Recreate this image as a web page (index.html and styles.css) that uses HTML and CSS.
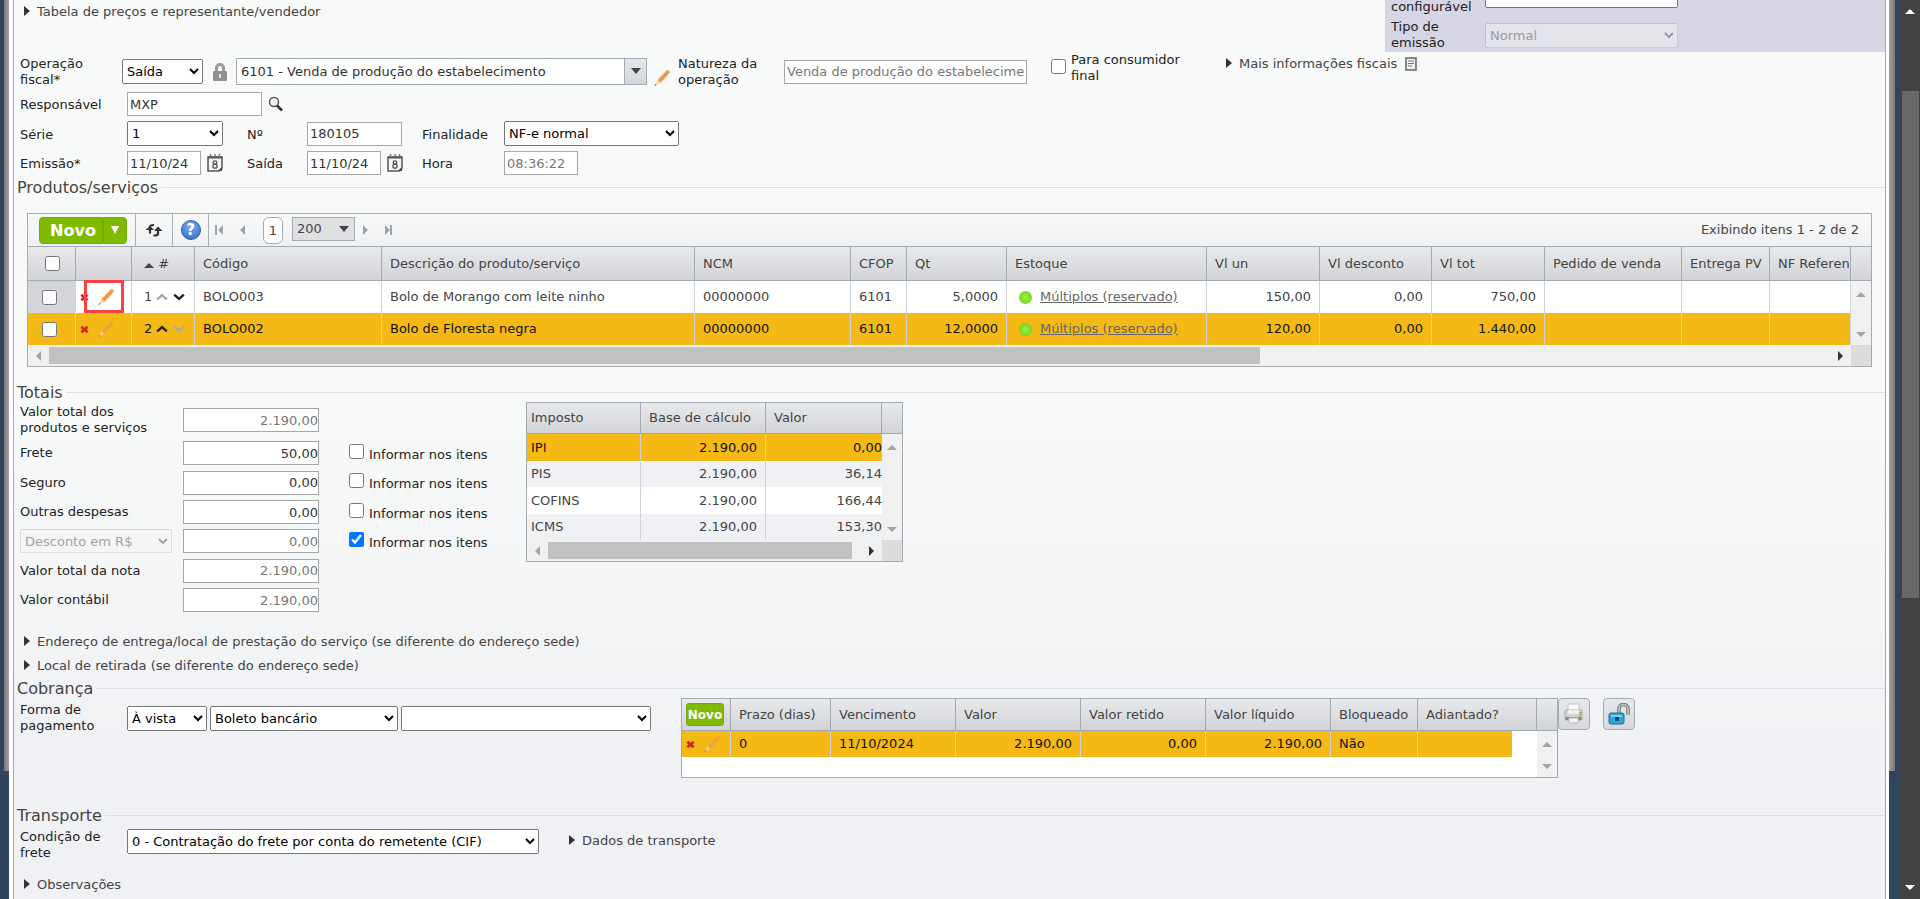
FILE: index.html
```html
<!DOCTYPE html>
<html lang="pt-BR">
<head>
    <meta charset="UTF-8">
    <title>Nota fiscal</title>
    <link rel="stylesheet" href="styles.css">
</head>
<body>
    <!-- icons used more than once -->
    <svg class="sprite" aria-hidden="true">
        <symbol id="pencil" viewBox="0 0 18 18">
            <path d="M4.500 11 13.500 1.500a1.500 1.500 0 0 1 2.200 0l.7.7a1.500 1.500 0 0 1 0 2L7.500 14z" fill="#f0a04b"/>
            <path d="M6 12.500 15 3" stroke="#e8903f" stroke-width="1" fill="none"/>
            <path d="M4.500 11 7.500 14 1.500 17z" fill="#f3d9b8"/>
            <path d="M2.300 15 3.500 16 1.500 17z" fill="#555"/>
        </symbol>
        <symbol id="delete" viewBox="0 0 10 10">
            <path d="M1.500 2 8.500 8M8.500 2 1.500 8" stroke="#cb2a22" stroke-width="3" fill="none"/>
        </symbol>
        <symbol id="calendar" viewBox="0 0 16 18">
            <path d="M1 3h14v11l-3 3H1z" fill="#f6f6f6" stroke="#555" stroke-width="1.500"/>
            <path d="M1 2.500h14v2H1z" fill="#555"/>
            <path d="M3.500 0v3M8 0v3M12.500 0v3" stroke="#777" stroke-width="1.500"/>
            <path d="M15 13v4h-4z" fill="#444"/>
            <ellipse cx="8" cy="8.500" rx="1.800" ry="1.700" fill="none" stroke="#555" stroke-width="1.300"/>
            <ellipse cx="8" cy="12.200" rx="2.100" ry="2" fill="none" stroke="#555" stroke-width="1.300"/>
        </symbol>
        <symbol id="up" viewBox="0 0 10 6"><path d="M1 5 5 1.500 9 5" stroke="currentColor" stroke-width="2" fill="none"/></symbol>
        <symbol id="down" viewBox="0 0 10 6"><path d="M1 1 5 4.500 9 1" stroke="currentColor" stroke-width="2" fill="none"/></symbol>
    </svg>

    <div class="frame frame-left"></div>

    <div class="window">
        <main class="page">
            <div class="top">
                <details class="more"><summary>Tabela de preços e representante/vendedor</summary></details>
                <div class="panel">
                    <div class="panel-row">
                        <label for="config">configurável</label>
                        <select id="config"><option></option></select>
                    </div>
                    <div class="panel-row">
                        <label for="tipo">Tipo de emissão</label>
                        <select id="tipo" disabled><option>Normal</option></select>
                    </div>
                </div>
            </div>

            <div class="fiscal">
                <label class="label-op" for="operacao">Operação fiscal*</label>
                <select class="w-op" id="operacao"><option>Saída</option></select>
                <svg class="lock" viewBox="0 0 14 18" width="14" height="18">
                    <path d="M3.500 9V5a3.500 3.500 0 0 1 7 0v4" fill="none" stroke="#999" stroke-width="3"/>
                    <rect x="0" y="8" width="14" height="10" rx="1" fill="#8f8f8f"/>
                    <path d="M6 11h2v4H6z" fill="#ddd"/>
                </svg>
                <div class="combo">
                    <input type="text" aria-label="CFOP" value="6101 - Venda de produção do estabelecimento">
                    <button aria-label="Abrir lista"><span class="tri-down"></span></button>
                </div>
                <svg class="edit" width="18" height="18"><use href="#pencil"/></svg>
                <label class="label-nat" for="natureza">Natureza da operação</label>
                <input class="w-nat dim" id="natureza" type="text" value="Venda de produção do estabelecimento">
                <div class="consumer">
                    <input type="checkbox" id="consumidor">
                    <label for="consumidor">Para consumidor final</label>
                </div>
                <details class="more fiscal-more"><summary>Mais informações fiscais
                    <svg width="12" height="14" viewBox="0 0 12 14">
                        <path d="M1 1h10v12H1z" fill="#eee" stroke="#666" stroke-width="1.500"/>
                        <path d="M3 4h6M3 6.500h6M3 9h4" stroke="#777"/>
                    </svg>
                </summary></details>
            </div>

            <div class="fields">
                <label for="resp">Responsável</label>
                <div class="field wide">
                    <input class="w-resp" id="resp" type="text" value="MXP">
                    <svg width="16" height="16" viewBox="0 0 16 16">
                        <circle cx="6" cy="6" r="4.500" fill="#eef3f5" stroke="#555" stroke-width="1.500"/>
                        <path d="M9 9.500 14 14.500" stroke="#333" stroke-width="2.500"/>
                    </svg>
                </div>

                <label for="serie">Série</label>
                <select class="w-serie" id="serie"><option>1</option></select>
                <label for="numero">Nº</label>
                <input class="w-num" id="numero" type="text" value="180105">
                <label for="finalidade">Finalidade</label>
                <select class="w-fin" id="finalidade"><option>NF-e normal</option></select>

                <label for="emissao">Emissão*</label>
                <div class="field">
                    <input class="w-date" id="emissao" type="text" value="11/10/24">
                    <svg width="16" height="18"><use href="#calendar"/></svg>
                </div>
                <label for="saida">Saída</label>
                <div class="field">
                    <input class="w-date" id="saida" type="text" value="11/10/24">
                    <svg width="16" height="18"><use href="#calendar"/></svg>
                </div>
                <label for="hora">Hora</label>
                <input class="w-date dim" id="hora" type="text" value="08:36:22">
            </div>

            <h2>Produtos/serviços</h2>
            <div class="grid products">
                <div class="toolbar">
                    <div class="split">
                        <button class="novo">Novo</button>
                        <button class="novo-more" aria-label="Mais opções"><span class="tri-down"></span></button>
                    </div>
                    <button class="tool refresh" aria-label="Atualizar">
                        <svg width="18" height="14" viewBox="0 0 18 14">
                            <path d="M5 10.500V3.500Q5 2 9 2" fill="none" stroke="#333" stroke-width="2.200"/>
                            <path d="M0.500 7 5 3 9 7z" fill="#333"/>
                            <path d="M13 5v6Q13 12.500 8.500 12.500" fill="none" stroke="#333" stroke-width="2.200"/>
                            <path d="M9 8 13 3.500 17.500 8z" fill="#333"/>
                        </svg>
                    </button>
                    <button class="tool" aria-label="Ajuda"><span class="help">?</span></button>
                    <div class="pager">
                        <span class="bar"></span><span class="tri-left first"></span>
                        <span class="tri-left prev"></span>
                        <button class="current">1</button>
                        <div class="size">
                            <select aria-label="Itens por página"><option>200</option></select>
                            <span class="tri-down"></span>
                        </div>
                        <span class="tri-right next"></span>
                        <span class="tri-right"></span><span class="bar"></span>
                    </div>
                    <span class="count">Exibindo itens 1 - 2 de 2</span>
                </div>
                <table>
                    <colgroup>
                        <col class="c48"><col class="c56"><col class="c63"><col class="c187"><col>
                        <col class="c156"><col class="c56"><col class="c100"><col class="c200"><col class="c113">
                        <col class="c112"><col class="c113"><col class="c137"><col class="c88"><col class="c81"><col class="c20">
                    </colgroup>
                    <thead>
                        <tr>
                            <th class="check"><input type="checkbox" aria-label="Marcar todos"></th>
                            <th></th>
                            <th class="order"><span class="tri-up"></span> #</th>
                            <th>Código</th>
                            <th>Descrição do produto/serviço</th>
                            <th>NCM</th>
                            <th>CFOP</th>
                            <th>Qt</th>
                            <th>Estoque</th>
                            <th>Vl un</th>
                            <th>Vl desconto</th>
                            <th>Vl tot</th>
                            <th>Pedido de venda</th>
                            <th>Entrega PV</th>
                            <th>NF Referen</th>
                            <th></th>
                        </tr>
                    </thead>
                    <tbody>
                        <tr>
                            <td class="check grey"><input type="checkbox" aria-label="BOLO003"></td>
                            <td class="actions marked"><svg width="9" height="9"><use href="#delete"/></svg><svg width="18" height="18"><use href="#pencil"/></svg></td>
                            <td class="order">1 <svg class="off" width="12" height="8"><use href="#up"/></svg> <svg width="12" height="8"><use href="#down"/></svg></td>
                            <td>BOLO003</td>
                            <td>Bolo de Morango com leite ninho</td>
                            <td>00000000</td>
                            <td>6101</td>
                            <td class="num">5,0000</td>
                            <td><span class="dot"></span><a href="#">Múltiplos (reservado)</a></td>
                            <td class="num">150,00</td>
                            <td class="num">0,00</td>
                            <td class="num">750,00</td>
                            <td></td>
                            <td></td>
                            <td></td>
                            <td class="scroll-top"><span class="tri-up"></span></td>
                        </tr>
                        <tr class="selected">
                            <td class="check"><input type="checkbox" aria-label="BOLO002"></td>
                            <td class="actions"><svg width="9" height="9"><use href="#delete"/></svg><svg class="faded" width="18" height="18"><use href="#pencil"/></svg></td>
                            <td class="order">2 <svg width="12" height="8"><use href="#up"/></svg> <svg class="off" width="12" height="8"><use href="#down"/></svg></td>
                            <td>BOLO002</td>
                            <td>Bolo de Floresta negra</td>
                            <td>00000000</td>
                            <td>6101</td>
                            <td class="num">12,0000</td>
                            <td><span class="dot"></span><a href="#">Múltiplos (reservado)</a></td>
                            <td class="num">120,00</td>
                            <td class="num">0,00</td>
                            <td class="num">1.440,00</td>
                            <td></td>
                            <td></td>
                            <td></td>
                            <td class="scroll-bottom"><span class="tri-down"></span></td>
                        </tr>
                    </tbody>
                </table>
                <div class="hscroll">
                    <span class="tri-left"></span>
                    <div class="track"><div class="thumb thumb-products"></div></div>
                    <span class="tri-right"></span>
                    <div class="corner"></div>
                </div>
            </div>

            <h2 class="title-totals">Totais</h2>
            <div class="totals">
                <div class="sums">
                    <label for="vprod">Valor total dos produtos e serviços</label>
                    <input class="dim" id="vprod" type="text" value="2.190,00">
                    <span></span>

                    <label for="frete">Frete</label>
                    <input id="frete" type="text" value="50,00">
                    <div class="inform"><input type="checkbox" id="i1"><label for="i1">Informar nos itens</label></div>

                    <label for="seguro">Seguro</label>
                    <input id="seguro" type="text" value="0,00">
                    <div class="inform"><input type="checkbox" id="i2"><label for="i2">Informar nos itens</label></div>

                    <label for="outras">Outras despesas</label>
                    <input id="outras" type="text" value="0,00">
                    <div class="inform"><input type="checkbox" id="i3"><label for="i3">Informar nos itens</label></div>

                    <select class="w-desc" aria-label="Tipo de desconto" disabled><option>Desconto em R$</option></select>
                    <input class="dim" type="text" aria-label="Desconto" value="0,00">
                    <div class="inform"><input type="checkbox" id="i4" checked><label for="i4">Informar nos itens</label></div>

                    <label for="vnota">Valor total da nota</label>
                    <input class="dim" id="vnota" type="text" value="2.190,00">
                    <span></span>

                    <label for="vcont">Valor contábil</label>
                    <input class="dim" id="vcont" type="text" value="2.190,00">
                    <span></span>
                </div>

                <div class="grid taxes">
                    <table>
                        <colgroup><col class="c114"><col class="c125"><col><col class="c20"></colgroup>
                        <thead>
                            <tr><th>Imposto</th><th>Base de cálculo</th><th>Valor</th><th></th></tr>
                        </thead>
                        <tbody>
                            <tr class="selected"><td>IPI</td><td class="num">2.190,00</td><td class="num">0,00</td><td class="scroll-top"><span class="tri-up"></span></td></tr>
                            <tr class="even"><td>PIS</td><td class="num">2.190,00</td><td class="num">36,14</td><td class="scroll-mid"></td></tr>
                            <tr><td>COFINS</td><td class="num">2.190,00</td><td class="num">166,44</td><td class="scroll-mid"></td></tr>
                            <tr class="even"><td>ICMS</td><td class="num">2.190,00</td><td class="num">153,30</td><td class="scroll-bottom"><span class="tri-down"></span></td></tr>
                        </tbody>
                    </table>
                    <div class="hscroll">
                        <span class="tri-left"></span>
                        <div class="track"><div class="thumb thumb-taxes"></div></div>
                        <span class="tri-right"></span>
                        <div class="corner"></div>
                    </div>
                </div>
            </div>

            <div class="addresses">
                <details class="more"><summary>Endereço de entrega/local de prestação do serviço (se diferente do endereço sede)</summary></details>
                <details class="more"><summary>Local de retirada (se diferente do endereço sede)</summary></details>
            </div>

            <h2 class="title-billing">Cobrança</h2>
            <div class="billing">
                <div class="payment">
                    <label for="forma">Forma de pagamento</label>
                    <select class="w-forma" id="forma"><option>À vista</option></select>
                    <select class="w-meio" aria-label="Meio de pagamento"><option>Boleto bancário</option></select>
                    <select class="w-conta" aria-label="Conta"><option></option></select>
                </div>
                <div class="grid installments">
                    <table>
                        <colgroup>
                            <col class="c49"><col class="c100"><col class="c125"><col class="c125"><col class="c125">
                            <col class="c125"><col class="c87"><col class="c94"><col><col class="c20">
                        </colgroup>
                        <thead>
                            <tr>
                                <th class="cell-novo"><button class="novo-small">Novo</button></th>
                                <th>Prazo (dias)</th>
                                <th>Vencimento</th>
                                <th>Valor</th>
                                <th>Valor retido</th>
                                <th>Valor líquido</th>
                                <th>Bloqueado</th>
                                <th colspan="2">Adiantado?</th>
                                <th></th>
                            </tr>
                        </thead>
                        <tbody>
                            <tr class="selected">
                                <td class="actions"><svg width="9" height="9"><use href="#delete"/></svg><svg class="faded" width="18" height="18"><use href="#pencil"/></svg></td>
                                <td>0</td>
                                <td>11/10/2024</td>
                                <td class="num">2.190,00</td>
                                <td class="num">0,00</td>
                                <td class="num">2.190,00</td>
                                <td>Não</td>
                                <td class="last"></td>
                                <td class="blank"></td>
                                <td class="scroll-top"><span class="tri-up"></span></td>
                            </tr>
                            <tr class="empty">
                                <td class="blank" colspan="9"></td>
                                <td class="scroll-bottom"><span class="tri-down"></span></td>
                            </tr>
                        </tbody>
                    </table>
                </div>
                <button class="square" aria-label="Imprimir">
                    <svg width="22" height="22" viewBox="0 0 22 22">
                        <path d="M5 1h11v8H5z" fill="#fafafa" stroke="#c5c5c5"/>
                        <path d="M2 8q0-1 1-1h15q1 0 1 1v8q0 1-1 1H3q-1 0-1-1z" fill="#d2d2d0" stroke="#aaa"/>
                        <path d="M5 7h11v4H5z" fill="#efefed"/>
                        <path d="M2.500 14h16v3h-16z" fill="#888"/>
                        <path d="M6 15h9v5H6z" fill="#f5f5f5" stroke="#bbb"/>
                        <path d="M16.500 9h2v3h-2z" fill="#7ac93b"/>
                        <path d="M16.500 12h2v2h-2z" fill="#f0a33c"/>
                    </svg>
                </button>
                <button class="square unlock" aria-label="Desbloquear">
                    <svg width="22" height="22" viewBox="0 0 22 22">
                        <path d="M11 10V6a4.500 4.500 0 0 1 9 0v6" fill="none" stroke="#777" stroke-width="3.500"/>
                        <path d="M11 10V6a4.500 4.500 0 0 1 9 0v6" fill="none" stroke="#c8c8c8" stroke-width="1.500"/>
                        <rect x="1" y="10" width="15" height="11" rx="2" fill="#2fa6da" stroke="#1b6c96"/>
                        <path d="M3 12h11v2H3z" fill="#7dcdf0"/>
                        <rect x="7" y="14" width="4" height="4" fill="#0d4868"/>
                    </svg>
                </button>
            </div>

            <h2 class="title-transport">Transporte</h2>
            <div class="transport">
                <label for="condicao">Condição de frete</label>
                <select class="w-cond" id="condicao"><option>0 - Contratação do frete por conta do remetente (CIF)</option></select>
                <details class="more"><summary>Dados de transporte</summary></details>
            </div>

            <details class="more notes"><summary>Observações</summary></details>
        </main>
    </div>

    <div class="frame frame-right"></div>

    <div class="scrollbar">
        <span class="tri-up"></span>
        <div class="scroll-thumb"></div>
        <span class="tri-down"></span>
    </div>
</body>
</html>
```

FILE: styles.css
```css
*, *::before, *::after {
    box-sizing: border-box;
}
body {
    margin: 0;
    min-height: 100vh;
    display: grid;
    grid-template-columns: 9px 1fr 11px 20px;
    background: #2f445d;
    font-family: Verdana, "DejaVu Sans", sans-serif;
    font-size: 13px;
    line-height: 16px;
    color: #222;
}
input, select, button {
    font-family: inherit;
    font-size: 13px;
    margin: 0;
}
input[type="text"] {
    height: 24px;
    padding: 1px 2px;
    border: 1px solid #a6a6a6;
    color: #333;
    background: #fff;
}
input[type="text"].dim {
    color: #777;
}
input[type="checkbox"] {
    width: 15px;
    height: 15px;
    flex: none;
}
select {
    height: 25px;
}
button {
    padding: 0;
    cursor: pointer;
}
svg {
    flex: none;
}
.sprite {
    position: absolute;
    width: 0;
    height: 0;
}

/* window frame */
.frame::before {
    content: "";
    display: block;
    height: 771px;
    background: linear-gradient(90deg, #77777a, #a3a09c);
}
.frame-left::before {
    margin-left: 4px;
}
.frame-right::before {
    margin-right: 5px;
    background: linear-gradient(90deg, #a3a09c, #77777a);
}
.window {
    min-width: 0;
    background: #fff;
    padding: 0 3px 0 4px;
}
.page {
    min-height: 100vh;
    border: solid #a4a9b5;
    border-width: 0 1px;
    padding-left: 3px;
    background: linear-gradient(#f8faf9 0, #f8faf9 44%, #f0f1f4 84%);
}
.scrollbar {
    background: #424242;
    display: flex;
    flex-direction: column;
    align-items: center;
    padding: 9px 0;
}
.scroll-thumb {
    width: 17px;
    height: 507px;
    margin: 77px 0 auto;
    background: #686868;
}
.scrollbar .tri-up {
    border-bottom-color: #fff;
}
.scrollbar .tri-down {
    border-top-color: #fff;
}

/* triangles */
.tri-up, .tri-down, .tri-left, .tri-right {
    display: inline-block;
    width: 0;
    height: 0;
    flex: none;
    border: 5px solid transparent;
}
.tri-up {
    border-top: 0;
    border-bottom-color: #444;
}
.tri-down {
    border-bottom: 0;
    border-top-color: #444;
}
.tri-left {
    border-left: 0;
    border-right-color: #a0a3a8;
}
.tri-right {
    border-right: 0;
    border-left-color: #a0a3a8;
}

/* collapsible links */
.more summary {
    display: flex;
    align-items: center;
    height: 24px;
    color: #444;
    list-style: none;
    cursor: pointer;
}
.more summary::before {
    content: "";
    border: 5px solid transparent;
    border-right: 0;
    border-left: 6px solid #333;
    margin: 0 7px 2px 0;
}
.more svg {
    margin-left: 8px;
}

/* top of the form */
.top {
    display: flex;
    justify-content: space-between;
    height: 52px;
    padding-left: 7px;
}
.panel {
    width: 500px;
    background: #d6d5e3;
    display: flex;
    flex-direction: column;
    justify-content: flex-end;
    gap: 4px;
    padding: 0 6px 1px;
    overflow: hidden;
}
.panel-row {
    display: flex;
    align-items: center;
    height: 32px;
    flex: none;
}
.panel-row:first-child {
    align-items: flex-end;
}
.panel-row:first-child select {
    margin-bottom: 7px;
}
.panel label {
    width: 94px;
}
.panel select {
    width: 193px;
}
.fiscal {
    display: flex;
    align-items: center;
    height: 39px;
    padding-left: 3px;
}
.label-op {
    width: 102px;
    padding-right: 30px;
}
.w-op {
    width: 81px;
}
.lock {
    margin: 0 9px 0 10px;
}
.combo {
    width: 411px;
    height: 27px;
    display: flex;
    border: 1px solid #a4aab3;
}
.combo input[type="text"] {
    flex: 1;
    height: 25px;
    border: 0;
    padding: 0 4px;
}
.combo button {
    width: 22px;
    border: 0;
    border-left: 1px solid #a4aab3;
    background: linear-gradient(#e6e7ea, #d3d5da);
}
.combo .tri-down {
    border-width: 6px 5px 0;
    margin-bottom: 2px;
}
.edit {
    align-self: flex-end;
    margin: 0 7px 4px 6px;
}
.label-nat {
    width: 106px;
    padding-right: 10px;
}
.w-nat {
    width: 243px;
}
.consumer {
    display: flex;
    gap: 5px;
    width: 175px;
    margin-left: 24px;
    align-self: flex-start;
}
.consumer input {
    margin-top: 7px;
}
.consumer label {
    width: 130px;
}
.fiscal-more {
    align-self: flex-start;
}

.fields {
    display: grid;
    grid-template-columns: 107px 120px 60px 115px 82px 1fr;
    grid-template-rows: 24px 25px 24px;
    row-gap: 5px;
    align-items: center;
    padding: 1px 0 0 3px;
}
.fields > label {
    padding-top: 2px;
}
.field {
    display: flex;
    align-items: center;
    gap: 6px;
}
.wide {
    grid-column: 2 / -1;
}
.w-resp {
    width: 135px;
}
.w-serie {
    width: 96px;
}
.w-num {
    width: 95px;
}
.w-fin {
    width: 175px;
}
.w-date {
    width: 74px;
}

/* section titles */
h2 {
    display: flex;
    align-items: center;
    gap: 3px;
    height: 19px;
    margin: 3px 0 0;
    font-size: 16px;
    font-weight: normal;
    color: #444;
}
h2::after {
    content: "";
    flex: 1;
    height: 1px;
    background: #dcdedf;
}

/* grids */
.grid {
    border: 1px solid #a4aab3;
    background: #fff;
}
table {
    width: 100%;
    table-layout: fixed;
    border-spacing: 0;
    color: #444;
}
th {
    height: 34px;
    padding: 0 8px;
    border-right: 1px solid #a4aab3;
    border-bottom: 1px solid #a4aab3;
    background: linear-gradient(#e8e9eb, #d1d3d8);
    font-weight: normal;
    text-align: left;
    white-space: nowrap;
    overflow: hidden;
}
td {
    height: 32px;
    padding: 0 8px;
    border-right: 1px solid #d0d2d8;
    white-space: nowrap;
}
th:last-child, td:last-child {
    border-right: 0;
    padding: 0;
}
.selected td {
    background: #f5b915;
    color: #111;
}
.even td {
    background: #f0f1f4;
}
.num {
    text-align: right;
}
td.scroll-top, td.scroll-mid, td.scroll-bottom {
    background: #f0f0f0;
    text-align: center;
    line-height: 8px;
}
.scroll-top {
    vertical-align: top;
}
.scroll-bottom {
    vertical-align: bottom;
}
td.scroll-top {
    padding-top: 8px;
}
td.scroll-bottom {
    padding-bottom: 8px;
}
.scroll-top .tri-up {
    border-bottom-color: #a3a3a3;
}
.scroll-bottom .tri-down {
    border-top-color: #a3a3a3;
}
.hscroll {
    display: flex;
    align-items: center;
    height: 21px;
    background: #f0f0f0;
    padding-left: 8px;
}
.hscroll .tri-right {
    border-left-color: #333;
    margin-right: 8px;
}
.track {
    flex: 1;
    margin: 0 8px;
}
.thumb {
    height: 17px;
    background: #c1c1c1;
}
.thumb-products {
    width: 68%;
}
.thumb-taxes {
    width: 97%;
}
.corner {
    width: 20px;
    height: 21px;
    background: #dcdcdc;
}
.c20 { width: 20px; }
.c48 { width: 48px; }
.c49 { width: 49px; }
.c56 { width: 56px; }
.c63 { width: 63px; }
.c81 { width: 81px; }
.c87 { width: 87px; }
.c88 { width: 88px; }
.c94 { width: 94px; }
.c100 { width: 100px; }
.c112 { width: 112px; }
.c113 { width: 113px; }
.c114 { width: 114px; }
.c125 { width: 125px; }
.c137 { width: 137px; }
.c156 { width: 156px; }
.c187 { width: 187px; }
.c200 { width: 200px; }

/* products */
.products {
    margin: 16px 13px 0 10px;
}
.toolbar {
    display: flex;
    align-items: center;
    height: 33px;
    border-bottom: 1px solid #a4aab3;
    background: linear-gradient(#f8faf9, #eff0f3);
    color: #444;
}
.split {
    display: flex;
    width: 88px;
    height: 27px;
    margin: 0 8px 0 11px;
}
.novo, .novo-more, .novo-small {
    border: 1px solid #74ab00;
    background: #80ba00;
    color: #fff;
    font-weight: bold;
}
.novo {
    width: 64px;
    border-radius: 4px 0 0 4px;
    font-size: 16px;
    padding-left: 4px;
}
.novo-more {
    width: 24px;
    border-radius: 0 4px 4px 0;
    display: flex;
    align-items: center;
    justify-content: center;
}
.novo-more .tri-down {
    border-width: 8px 4px 0;
    border-top-color: #fff;
}
.tool {
    width: 36px;
    height: 32px;
    border: 0;
    border-left: 1px solid #a9adb4;
    background: none;
    display: flex;
    align-items: center;
    justify-content: center;
}
.refresh {
    width: 37px;
}
.help {
    width: 20px;
    height: 20px;
    border: 1px solid #2a5da8;
    border-radius: 50%;
    background: radial-gradient(circle at 50% 30%, #7db0ee, #2f68bd);
    color: #fff;
    font-size: 15px;
    font-weight: bold;
    line-height: 18px;
}
.pager {
    display: flex;
    align-items: center;
    height: 32px;
    border-left: 1px solid #a9adb4;
    padding-left: 6px;
}
.bar {
    width: 2px;
    height: 10px;
    background: #a0a3a8;
}
.first {
    margin: 0 17px 0 1px;
}
.prev {
    margin-right: 18px;
}
.current {
    width: 20px;
    height: 27px;
    margin-right: 9px;
    border: 1px solid #a4aab3;
    border-radius: 6px;
    background: #fff;
    color: #444;
}
.size {
    display: flex;
    align-items: center;
    width: 63px;
    height: 24px;
    margin: 0 8px 3px 0;
    border: 1px solid #a4aab3;
    background: #dfe0e4;
}
.size select {
    appearance: none;
    flex: 1;
    height: 22px;
    border: 0;
    padding: 0 4px;
    background: none;
    color: #444;
}
.size .tri-down {
    border-width: 6px 5px 0;
    margin-right: 5px;
}
.next {
    margin-right: 17px;
}
.count {
    margin-left: auto;
    padding-right: 12px;
}
.check input {
    display: block;
}
td.check {
    padding-left: 14px;
}
th.check {
    padding-left: 17px;
}
td.grey {
    background: #d3d5db;
}
.order {
    padding-left: 12px;
}
td.order {
    padding-right: 0;
}
.order svg {
    color: #222;
}
.order .off {
    color: #aaa;
}
.actions {
    padding: 0 4px;
}
.actions svg {
    vertical-align: middle;
}
.actions svg + svg {
    margin-left: 8px;
}
.faded {
    opacity: 0.7;
}
/* highlight around the edit button */
.marked {
    position: relative;
}
.marked::after {
    content: "";
    position: absolute;
    top: -1px;
    left: 8px;
    width: 40px;
    height: 33px;
    border: 3px solid #f94141;
}
.dot {
    display: inline-block;
    width: 13px;
    height: 13px;
    margin: 0 8px 0 4px;
    border-radius: 50%;
    background: radial-gradient(#a2f04a, #62cc0c);
    vertical-align: -3px;
}
.grid a {
    color: #666;
}

/* totals */
.title-totals {
    margin-top: 16px;
}
.totals {
    display: flex;
    align-items: flex-start;
    gap: 12px;
    padding-left: 3px;
}
.sums {
    display: grid;
    grid-template-columns: 163px 166px 165px;
    grid-template-rows: 32px 24px 25px 24px 24px 25px 24px;
    row-gap: 5px;
    align-items: center;
    padding-top: 2px;
}
.sums > label {
    padding-right: 20px;
}
.sums input[type="text"] {
    width: 136px;
    padding: 1px 0;
    text-align: right;
}
.w-desc {
    width: 152px;
    height: 24px;
}
.inform {
    display: flex;
    gap: 5px;
}
.inform label {
    padding-top: 3px;
}
.taxes {
    width: 377px;
}
.taxes th {
    height: 31px;
}
.taxes td {
    height: 27px;
}
.taxes tr:nth-child(even) td {
    height: 26px;
}
.taxes th:first-child, .taxes td:first-child {
    padding-left: 4px;
}
.taxes td:nth-child(3) {
    padding-right: 0;
    border-right: 0;
}

/* billing */
.addresses {
    padding: 18px 0 0 7px;
}
.title-billing {
    margin-top: 1px;
}
.billing {
    display: flex;
    align-items: flex-start;
    padding-left: 3px;
}
.payment {
    display: flex;
    align-items: center;
    gap: 3px;
    width: 661px;
    padding-top: 4px;
}
.payment label {
    width: 104px;
}
.w-forma {
    width: 80px;
}
.w-meio {
    width: 188px;
}
.w-conta {
    width: 250px;
}
.installments {
    width: 877px;
}
.installments th {
    height: 32px;
}
.installments td {
    height: 26px;
}
.installments td.last {
    border-right: 0;
}
.installments .empty td {
    height: 20px;
}
.installments td.blank {
    background: #fff;
    border-right: 0;
}
.installments .cell-novo {
    padding: 0 4px;
}
.novo-small {
    width: 38px;
    height: 23px;
    border-radius: 3px;
    font-size: 12px;
}
.square {
    display: flex;
    align-items: center;
    justify-content: center;
    width: 32px;
    height: 32px;
    border: 1px solid #a4aab3;
    border-radius: 4px;
    background: linear-gradient(#e6e7ea, #d6d8dc);
}
.unlock {
    margin-left: 13px;
}

/* transport */
.title-transport {
    margin-top: 28px;
}
.transport {
    display: flex;
    align-items: flex-start;
    padding: 4px 0 0 3px;
}
.transport label {
    width: 107px;
    padding-right: 20px;
}
.w-cond {
    width: 412px;
    margin-right: 30px;
}
.notes {
    padding: 12px 0 0 7px;
}
```
